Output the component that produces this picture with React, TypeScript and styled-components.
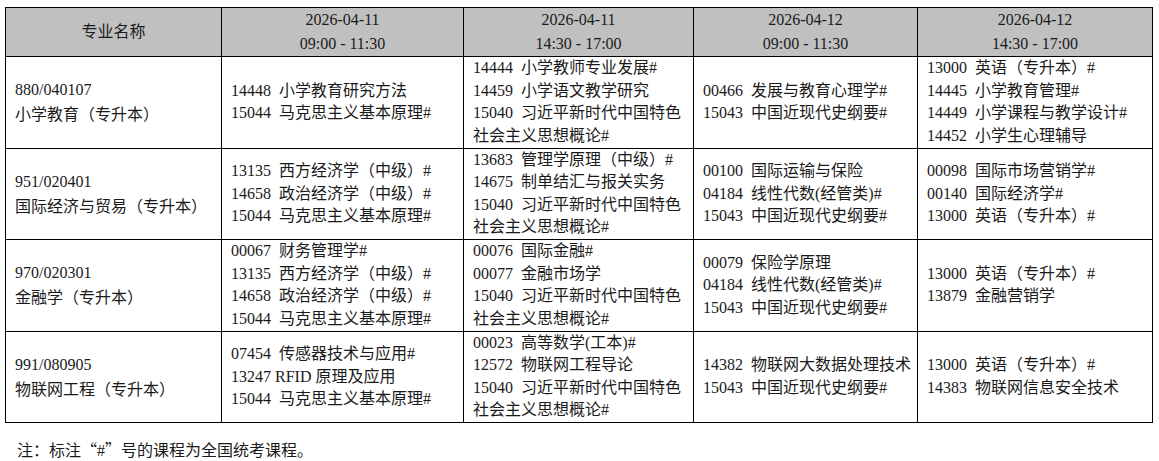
import React from 'react'
import styled, {createGlobalStyle} from 'styled-components'

const GlobalStyle = createGlobalStyle`
  body {
    margin: 0;
    background: #fff;
    color: #1a1a1a;
    font-family: "Liberation Serif", "Noto Sans CJK SC", serif;
  }
`

const Page = styled.div`
  padding: 7px 0 0 5px;
`

const Table = styled.table`
  border-collapse: collapse;
  table-layout: fixed;
  width: 1147px;
  font-size: 16px;
`

const HeadCell = styled.th`
  background: #c0c0c0;
  border: 1px solid #000;
  font-weight: normal;
  line-height: 24px;
  padding: 0;
  text-align: center;
  vertical-align: middle;
`

const Cell = styled.td<{ major?: boolean }>`
  border: 1px solid #000;
  padding: 0 8px 0 9px;
  line-height: ${p => p.major ? '25px' : '22.5px'};
  vertical-align: middle;
  white-space: pre;
  height: 90.5px;
`

const Line = styled.div``

const Note = styled.p`
  margin: 15px 0 0 12px;
  font-size: 16px;
  line-height: 22px;
`

// full-width quotes like the printed notice
const Quote = styled.span`
  font-family: "Noto Sans CJK SC", sans-serif;
`

const heads = [
  ['2026-04-11', '09:00 - 11:30'],
  ['2026-04-11', '14:30 - 17:00'],
  ['2026-04-12', '09:00 - 11:30'],
  ['2026-04-12', '14:30 - 17:00'],
]

const rows: { code: string, name: string, exams: string[][] }[] = [
  {
    code: '880/040107',
    name: '小学教育（专升本）',
    exams: [
      ['14448  小学教育研究方法', '15044  马克思主义基本原理#'],
      ['14444  小学教师专业发展#', '14459  小学语文教学研究', '15040  习近平新时代中国特色', '社会主义思想概论#'],
      ['00466  发展与教育心理学#', '15043  中国近现代史纲要#'],
      ['13000  英语（专升本）#', '14445  小学教育管理#', '14449  小学课程与教学设计#', '14452  小学生心理辅导'],
    ],
  },
  {
    code: '951/020401',
    name: '国际经济与贸易（专升本）',
    exams: [
      ['13135  西方经济学（中级）#', '14658  政治经济学（中级）#', '15044  马克思主义基本原理#'],
      ['13683  管理学原理（中级）#', '14675  制单结汇与报关实务', '15040  习近平新时代中国特色', '社会主义思想概论#'],
      ['00100  国际运输与保险', '04184  线性代数(经管类)#', '15043  中国近现代史纲要#'],
      ['00098  国际市场营销学#', '00140  国际经济学#', '13000  英语（专升本）#'],
    ],
  },
  {
    code: '970/020301',
    name: '金融学（专升本）',
    exams: [
      ['00067  财务管理学#', '13135  西方经济学（中级）#', '14658  政治经济学（中级）#', '15044  马克思主义基本原理#'],
      ['00076  国际金融#', '00077  金融市场学', '15040  习近平新时代中国特色', '社会主义思想概论#'],
      ['00079  保险学原理', '04184  线性代数(经管类)#', '15043  中国近现代史纲要#'],
      ['13000  英语（专升本）#', '13879  金融营销学'],
    ],
  },
  {
    code: '991/080905',
    name: '物联网工程（专升本）',
    exams: [
      ['07454  传感器技术与应用#', '13247 RFID 原理及应用', '15044  马克思主义基本原理#'],
      ['00023  高等数学(工本)#', '12572  物联网工程导论', '15040  习近平新时代中国特色', '社会主义思想概论#'],
      ['14382  物联网大数据处理技术', '15043  中国近现代史纲要#'],
      ['13000  英语（专升本）#', '14383  物联网信息安全技术'],
    ],
  },
]

export default function App() {
  return (
    <Page>
      <GlobalStyle/>
      <Table>
        <colgroup>
          <col style={{width: 216}}/>
          <col style={{width: 242}}/>
          <col style={{width: 230}}/>
          <col style={{width: 224}}/>
          <col style={{width: 235}}/>
        </colgroup>
        <thead>
          <tr>
            <HeadCell>专业名称</HeadCell>
            {heads.map((h, i) => (
              <HeadCell key={i}>
                <Line>{h[0]}</Line>
                <Line>{h[1]}</Line>
              </HeadCell>
            ))}
          </tr>
        </thead>
        <tbody>
          {rows.map(row => (
            <tr key={row.code}>
              <Cell major>
                <Line>{row.code}</Line>
                <Line>{row.name}</Line>
              </Cell>
              {row.exams.map((list, i) => (
                <Cell key={i}>
                  {list.map(text => <Line key={text}>{text}</Line>)}
                </Cell>
              ))}
            </tr>
          ))}
        </tbody>
      </Table>
      <Note>注：标注<Quote>“</Quote>#<Quote>”</Quote>号的课程为全国统考课程。</Note>
    </Page>
  )
}
